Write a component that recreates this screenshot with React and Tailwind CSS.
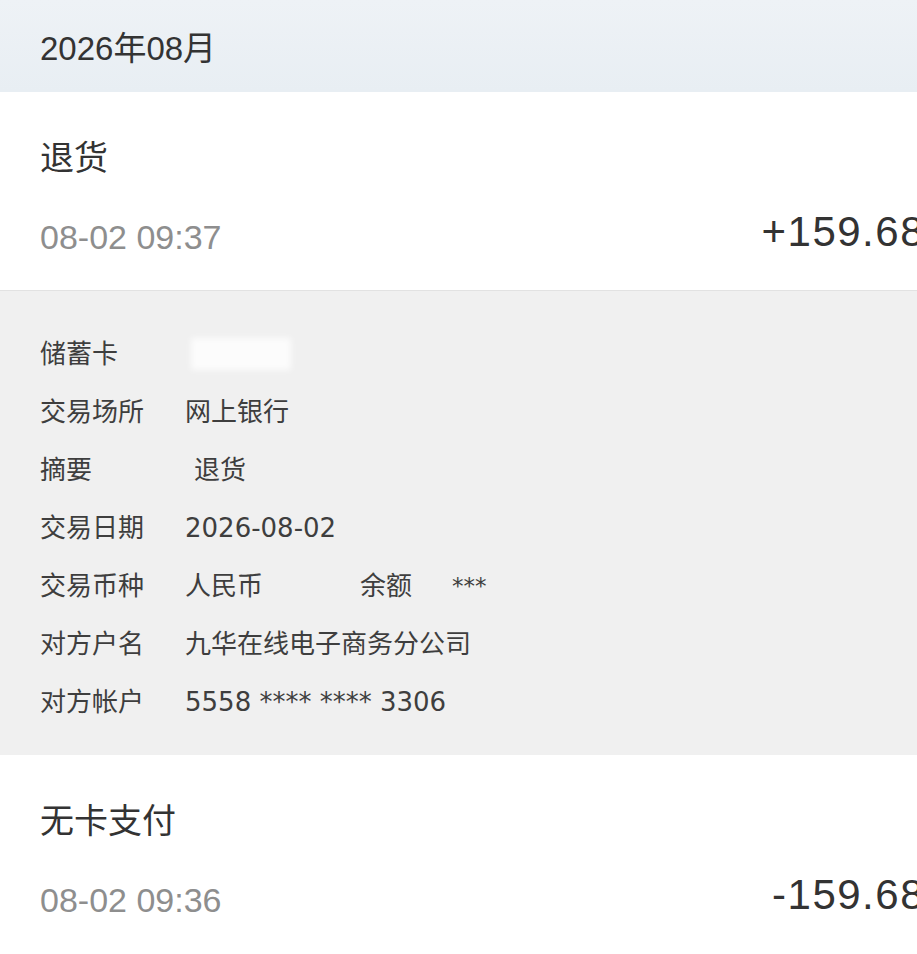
const rows = [
  { label: "交易场所", value: "网上银行" },
  { label: "摘要", value: "退货", shift: true },
  { label: "交易日期", value: "2026-08-02" },
  { label: "交易币种", value: "人民币", balance: "***" },
  { label: "对方户名", value: "九华在线电子商务分公司" },
  { label: "对方帐户", value: "5558 **** **** 3306" },
];

function Txn({ title, time, amount }) {
  return (
    <div className="h-[198px] bg-white px-[40px] pt-[49px] flex flex-col">
      <div className="text-[34px] leading-[34px] text-[#333333]">{title}</div>
      <div className="mt-[37px] h-[50px] flex items-center justify-between">
        <span className="text-[34px] leading-[34px] text-[#8e8e8e]">{time}</span>
        <span className="mb-[10px] mr-[-48px] text-[42px] leading-[42px] tracking-[1.5px] text-[#333333] whitespace-nowrap">
          {amount}
        </span>
      </div>
    </div>
  );
}

export default function App() {
  return (
    <div
      className="w-[917px] h-[954px] overflow-hidden bg-white"
      style={{ fontFamily: '"Liberation Sans", "Noto Sans CJK SC", sans-serif' }}
    >
      <div className="h-[92px] bg-gradient-to-b from-[#eef2f6] to-[#e8eef3] px-[40px] pt-[33px]">
        <div className="text-[33px] leading-[32px] text-[#333333]">2026年08月</div>
      </div>

      <Txn title="退货" time="08-02 09:37" amount="+159.68" />

      <div
        className="border-t border-[#e2e2e2] bg-[#f0f0f0] px-[40px] pt-[34px] pb-[24px] text-[26px] text-[#3e3e3e]"
        style={{ fontFamily: '"DejaVu Sans", "Noto Sans CJK SC", sans-serif' }}
      >
        <div className="h-[58px] flex items-center">
          <span className="w-[145px]">储蓄卡</span>
          <span className="block w-[100px] h-[32px] ml-[6px] bg-white/80 blur-[3px]"></span>
        </div>
        {rows.map((r) => (
          <div key={r.label} className="h-[58px] flex items-center">
            <span className="w-[145px] shrink-0">{r.label}</span>
            {r.balance ? (
              <>
                <span className="w-[175px]">{r.value}</span>
                <span className="w-[92px]">余额</span>
                <span className="text-[23px]">{r.balance}</span>
              </>
            ) : (
              <span className={r.shift ? "ml-[9px]" : ""}>{r.value}</span>
            )}
          </div>
        ))}
      </div>

      <Txn title="无卡支付" time="08-02 09:36" amount="-159.68" />
    </div>
  );
}
